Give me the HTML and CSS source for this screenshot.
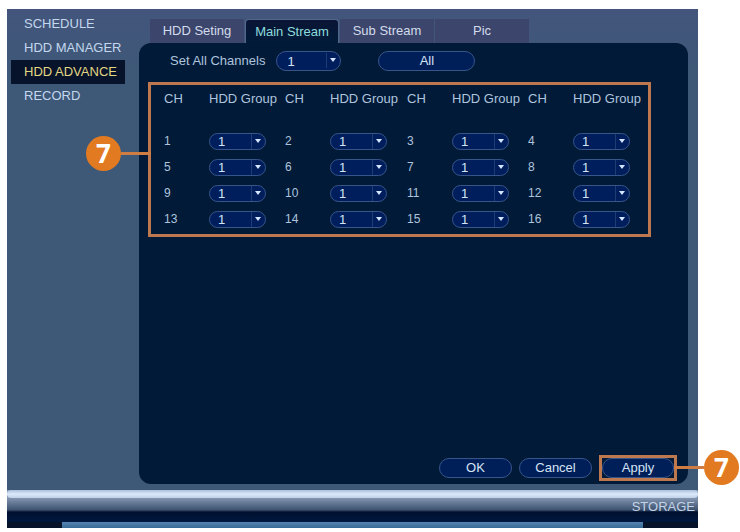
FILE: index.html
```html
<!DOCTYPE html>
<html lang="en">
<head>
<meta charset="utf-8">
<title>Storage</title>
<link rel="stylesheet" href="styles.css">
</head>
<body>
<div class="window">
  <div class="main">
    <nav class="sidebar">
      <a href="#schedule">SCHEDULE</a>
      <a href="#manager">HDD MANAGER</a>
      <a href="#advance" class="current">HDD ADVANCE</a>
      <a href="#record">RECORD</a>
    </nav>
    <div class="content">
      <div class="tabs">
        <button type="button" class="tab">HDD Seting</button>
        <button type="button" class="tab active">Main Stream</button>
        <button type="button" class="tab">Sub Stream</button>
        <button type="button" class="tab">Pic</button>
      </div>
      <form class="panel">
        <div class="set-all">
          <label for="all-channels">Set All Channels</label>
          <span class="drop wide"><select id="all-channels"><option>1</option></select><svg viewBox="0 0 14 17"><path class="sep" d="M.5 1v15"/><path class="arrow" d="M4 6h6l-3 4z"/></svg></span>
          <button type="button" class="pill all">All</button>
        </div>
        <div class="highlight channels">
          <table>
            <colgroup><col class="ch"><col class="group"><col class="ch"><col class="group last-wide"><col class="ch"><col class="group"><col class="ch"><col></colgroup>
            <thead>
              <tr><th>CH</th><th>HDD Group</th><th>CH</th><th>HDD Group</th><th>CH</th><th>HDD Group</th><th>CH</th><th>HDD Group</th></tr>
            </thead>
            <tbody id="rows"></tbody>
          </table>
          <span class="callout left"><b>7</b><i></i></span>
        </div>
        <div class="actions">
          <button type="button" class="pill">OK</button>
          <button type="button" class="pill">Cancel</button>
          <div class="highlight apply">
            <button type="button" class="pill">Apply</button>
            <span class="callout right"><i></i><b>7</b></span>
          </div>
        </div>
      </form>
    </div>
  </div>
  <footer class="footer"><div class="shine"></div><div class="title">STORAGE</div><div class="edge"></div></footer>
</div>
<script src="channels.js"></script>
</body>
</html>
```
FILE: styles.css
```css
* { box-sizing: border-box; }

body {
  margin: 0;
  padding: 9px 42px 4px 7px;
  min-height: 100vh;
  display: flex;
  background: #fff;
  font-family: "Liberation Sans", Arial, sans-serif;
  font-size: 13px;
  line-height: 16px;
  color: #afc4dd;
}

button, select { font: inherit; color: inherit; margin: 0; }

.window {
  flex: 1;
  display: flex;
  flex-direction: column;
  background: linear-gradient(#43557c, #3e5878 60px);
}

.main { flex: 1; display: flex; padding: 0 10px 6px 0; }

.sidebar { width: 132px; padding: 3px 14px 0 4px; }
.sidebar a {
  display: block;
  height: 24px;
  padding-left: 13px;
  line-height: 24px;
  color: #c3d7ed;
  text-decoration: none;
  white-space: nowrap;
}
.sidebar .current { background: #07132a; color: #e2d783; }

.content { flex: 1; display: flex; flex-direction: column; padding-top: 10px; }

.tabs { display: flex; gap: 1px; padding-left: 11px; }
.tab {
  width: 94px;
  height: 24px;
  padding: 0;
  border: 0;
  background: #3c456b;
  color: #d2dcec;
}
.tab.active {
  border: 1px solid #53678c;
  border-bottom: 0;
  border-radius: 4px 4px 0 0;
  background: linear-gradient(#0b1535, #001b39);
  color: #8fdcdd;
}

.panel {
  flex: 1;
  display: flex;
  flex-direction: column;
  padding: 7px 8px 3px 9px;
  border-radius: 12px;
  background: #001a38;
}

.set-all { display: flex; align-items: center; height: 22px; padding-left: 22px; }
.set-all .drop { margin-left: 11px; }

.pill {
  width: 73px;
  height: 20px;
  padding: 0;
  border: 1px solid #38558a;
  border-radius: 10px;
  background: #001e58;
  color: #d5e4f5;
}
.pill.all { width: 97px; margin-left: 37px; }

.drop { position: relative; display: block; width: 57px; height: 17px; }
.drop select {
  display: block;
  width: 100%;
  height: 100%;
  padding: 0 18px 0 8px;
  border: 1px solid #38558a;
  border-radius: 9px;
  background: #001e5c;
  color: #d5e4f5;
  line-height: 15px;
  appearance: none;
}
.drop svg { position: absolute; right: 1px; top: 0; width: 14px; height: 17px; pointer-events: none; }
.drop.wide { width: 65px; height: 20px; }
.drop.wide select { padding-left: 10px; border-radius: 10px; }
.drop.wide svg { top: 1px; }
.sep { stroke: #203c74; }
.arrow { fill: #d5e7ff; }

.highlight { position: relative; border: 3px solid #bd7850; }
.channels { margin-top: 10px; margin-right: 29px; padding: 0 0 2px 13px; }

table { width: 100%; table-layout: fixed; border-collapse: collapse; }
.ch { width: 45px; }
.group { width: 76px; }
.group.last-wide { width: 77px; }
th, td { padding: 0; text-align: left; font-weight: normal; white-space: nowrap; }
th { height: 43px; padding-top: 6px; vertical-align: top; }
td { height: 26px; vertical-align: middle; font-size: 12px; }
td select { font-size: 13px; }

.callout { position: absolute; display: flex; align-items: center; }
.callout b {
  width: 35px;
  height: 35px;
  border-radius: 50%;
  background: #e27a21;
  color: #fff;
  font: bold 26px/34px "Open Sans", sans-serif;
  text-align: center;
}
.callout i { width: 30px; height: 3px; background: #cf7d42; }
.callout.left { right: 100%; top: 51px; }
.callout.right { left: 100%; top: -8px; }

.actions { display: flex; align-items: center; justify-content: flex-end; gap: 7px; margin-top: auto; margin-right: 3px; }
.apply { display: flex; align-items: center; height: 26px; }
.apply .pill { width: 72px; }

.footer { height: 38px; display: flex; flex-direction: column; background: linear-gradient(#8294b0 10px, #00102e 10px); }
.shine { height: 8px; border-radius: 4px; background: linear-gradient(#aabfda, #dceafa 4px, #bed0e8); }
.title {
  height: 24px;
  padding-right: 3px;
  background: linear-gradient(#8294b0, #3c526f 12px, #00102e 14px, #001840);
  color: #c3d3e7;
  line-height: 18px;
  text-align: right;
}
.edge { height: 6px; background: linear-gradient(90deg, #061328 55px, transparent 55px calc(100% - 55px), #061328 calc(100% - 55px)), linear-gradient(#5484b4, #386b94); }
```
FILE: channels.js
```js
const rows = document.getElementById("rows");
for (let r = 0; r < 4; r++) {
  const tr = rows.insertRow();
  for (let c = 1; c <= 4; c++) {
    const n = r * 4 + c;
    tr.insertCell().innerHTML = `<label for="ch${n}">${n}</label>`;
    tr.insertCell().innerHTML = `<span class="drop"><select id="ch${n}"><option>1</option></select><svg viewBox="0 0 14 17"><path class="sep" d="M.5 1v15"/><path class="arrow" d="M4 6h6l-3 4z"/></svg></span>`;
  }
}
```
